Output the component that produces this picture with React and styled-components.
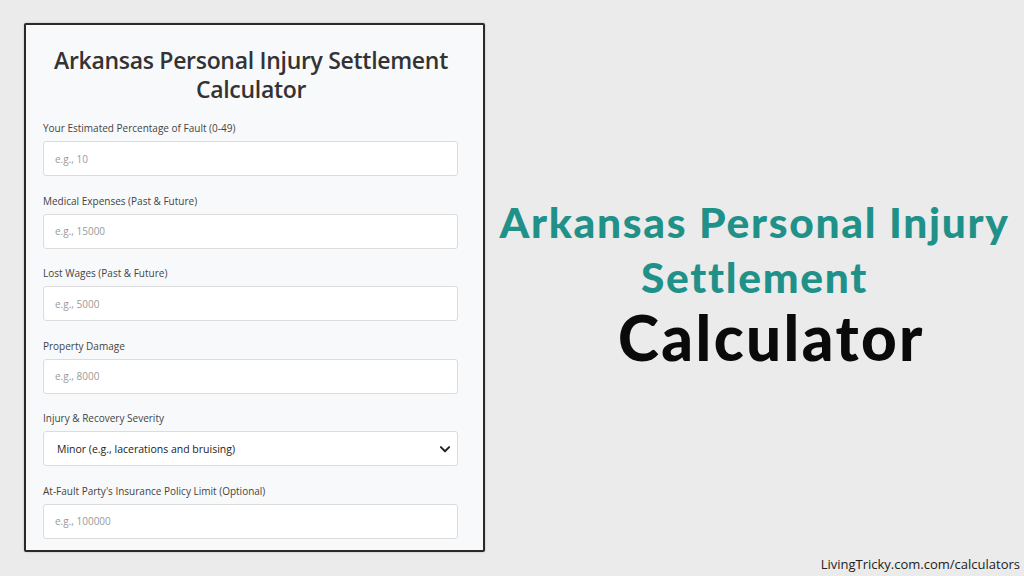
import React from 'react';
import styled, { createGlobalStyle } from 'styled-components';

const GlobalStyle = createGlobalStyle`
	html, body {
		margin: 0;
		padding: 0;
		background: #ebebeb;
	}
	* {
		box-sizing: border-box;
	}
`;

const fields = [
	{ label: 'Your Estimated Percentage of Fault (0-49)', placeholder: 'e.g., 10' },
	{ label: 'Medical Expenses (Past & Future)', placeholder: 'e.g., 15000' },
	{ label: 'Lost Wages (Past & Future)', placeholder: 'e.g., 5000' },
	{ label: 'Property Damage', placeholder: 'e.g., 8000' },
	{ label: 'Injury & Recovery Severity', select: 'Minor (e.g., lacerations and bruising)' },
	{ label: "At-Fault Party's Insurance Policy Limit (Optional)", placeholder: 'e.g., 100000' },
];

const Chevron = () => (
	<svg width="12" height="12" viewBox="0 0 16 16">
		<path d="M2.5 5.5 L8 11 L13.5 5.5" fill="none" stroke="#222" strokeWidth="2.6" strokeLinecap="round" strokeLinejoin="round" />
	</svg>
);

const App = () => {
	return (
		<Page>
			<GlobalStyle />
			<Card>
				<Title>Arkansas Personal Injury Settlement Calculator</Title>
				{fields.map((f) => (
					<Field key={f.label}>
						<Label>{f.label}</Label>
						{f.select ? (
							<SelectBox>
								<span>{f.select}</span>
								<Chevron />
							</SelectBox>
						) : (
							<Input placeholder={f.placeholder} />
						)}
					</Field>
				))}
			</Card>
			<Side>
				<Headline>
					<Teal>Arkansas Personal Injury</Teal>
					<Teal>Settlement</Teal>
					<Big>Calculator</Big>
				</Headline>
				<Footer>LivingTricky.com.com/calculators</Footer>
			</Side>
		</Page>
	);
};

const Page = styled.div`
	display: flex;
	width: 1024px;
	height: 576px;
	padding: 23px 0 24px 24px;
	font-family: 'Open Sans', 'Liberation Sans', sans-serif;
`;

const Card = styled.div`
	width: 461px;
	flex-shrink: 0;
	background: #f8f9fa;
	border: 2px solid #2a2a2a;
	border-radius: 2px;
	padding: 21px 24px 0 17px;
	box-shadow: 0 0 2px rgba(0, 0, 0, 0.25);
`;

const Title = styled.h1`
	margin: 0 0 17px;
	text-align: center;
	font-size: 23px;
	line-height: 29px;
	font-weight: 600;
	letter-spacing: -0.3px;
	color: #333;
`;

const Field = styled.div`
	display: flex;
	flex-direction: column;
	gap: 6px;
	margin-bottom: 17.5px;
`;

const Label = styled.label`
	font-size: 10px;
	line-height: 14px;
	color: #444;
`;

const Input = styled.input`
	width: 415px;
	height: 35px;
	border: 1px solid #dcdcdc;
	border-radius: 3px;
	background: #fff;
	padding: 0 11px;
	font-family: inherit;
	font-size: 10px;
	outline: none;
	&::placeholder {
		color: #9a9a9a;
	}
`;

const SelectBox = styled.div`
	width: 415px;
	height: 35px;
	border: 1px solid #dcdcdc;
	border-radius: 3px;
	background: #fff;
	padding: 0 6px 0 13px;
	display: flex;
	align-items: center;
	justify-content: space-between;
	font-size: 10.5px;
	color: #222;
`;

const Side = styled.div`
	flex: 1;
	display: flex;
	flex-direction: column;
	align-items: center;
	padding-top: 171px;
`;

const Headline = styled.div`
	display: flex;
	flex-direction: column;
	align-items: center;
	font-family: Lato, 'Open Sans', sans-serif;
`;

const Teal = styled.div`
	font-size: 42.5px;
	line-height: 55px;
	font-weight: 900;
	color: #1f9189;
	letter-spacing: 1.7px;
`;

const Big = styled.div`
	margin-top: 2px;
	padding-left: 34px;
	font-size: 62px;
	line-height: 62px;
	font-weight: 900;
	color: #0a0a0a;
	letter-spacing: 2.4px;
`;

const Footer = styled.div`
	margin-top: auto;
	align-self: flex-end;
	margin-right: 4px;
	font-family: 'Open Sans', 'Liberation Sans', sans-serif;
	font-size: 13px;
	color: #222;
	line-height: 16px;
	margin-bottom: -20px;
`;

export default App;
